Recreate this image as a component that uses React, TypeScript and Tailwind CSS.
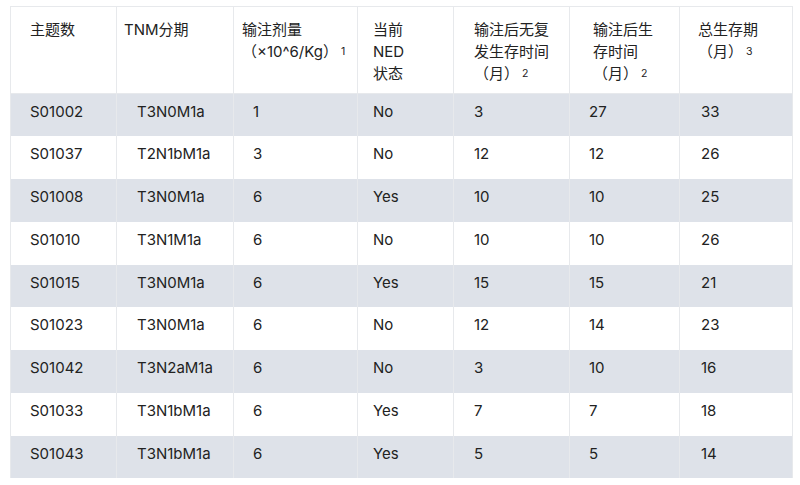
import type { ReactNode } from "react";

type Row = {
  id: string;
  tnm: string;
  dose: string;
  ned: string;
  rfs: string;
  os: string;
  total: string;
};

const rows: Row[] = [
  { id: "S01002", tnm: "T3N0M1a", dose: "1", ned: "No", rfs: "3", os: "27", total: "33" },
  { id: "S01037", tnm: "T2N1bM1a", dose: "3", ned: "No", rfs: "12", os: "12", total: "26" },
  { id: "S01008", tnm: "T3N0M1a", dose: "6", ned: "Yes", rfs: "10", os: "10", total: "25" },
  { id: "S01010", tnm: "T3N1M1a", dose: "6", ned: "No", rfs: "10", os: "10", total: "26" },
  { id: "S01015", tnm: "T3N0M1a", dose: "6", ned: "Yes", rfs: "15", os: "15", total: "21" },
  { id: "S01023", tnm: "T3N0M1a", dose: "6", ned: "No", rfs: "12", os: "14", total: "23" },
  { id: "S01042", tnm: "T3N2aM1a", dose: "6", ned: "No", rfs: "3", os: "10", total: "16" },
  { id: "S01033", tnm: "T3N1bM1a", dose: "6", ned: "Yes", rfs: "7", os: "7", total: "18" },
  { id: "S01043", tnm: "T3N1bM1a", dose: "6", ned: "Yes", rfs: "5", os: "5", total: "14" },
];

const Sup = ({ n }: { n: string }) => (
  <sup className="text-[10.5px] ml-[3px] relative -top-[2px]">{n}</sup>
);

const Th = ({ w, pl, children }: { w: string; pl: string; children: ReactNode }) => (
  <th
    className={`${w} ${pl} align-top text-left font-normal pt-[12px] leading-[22px] border border-[#e7e9ec]`}
  >
    {children}
  </th>
);

export default function App() {
  return (
    <div
      className="w-[800px] h-[485px] bg-white pt-[6px] pl-[10px] text-[15px] text-[#222]"
      style={{ fontFamily: '"Inter", "Noto Sans CJK SC", sans-serif' }}
    >
      <table className="w-[782px] border-collapse table-fixed">
        <thead>
          <tr className="h-[87px]">
            <Th w="w-[106px]" pl="pl-[19px]">主题数</Th>
            <Th w="w-[117px]" pl="pl-[7px]">TNM分期</Th>
            <Th w="w-[124px]" pl="pl-[8px]">
              输注剂量
              <br />
              （×10^6/Kg）
              <Sup n="1" />
            </Th>
            <Th w="w-[96px]" pl="pl-[15px]">
              当前
              <br />
              NED
              <br />
              状态
            </Th>
            <Th w="w-[116px]" pl="pl-[20px]">
              输注后无复
              <br />
              发生存时间
              <br />
              （月）
              <Sup n="2" />
            </Th>
            <Th w="w-[110px]" pl="pl-[23px]">
              输注后生
              <br />
              存时间
              <br />
              （月）
              <Sup n="2" />
            </Th>
            <Th w="w-[113px]" pl="pl-[18px]">
              总生存期
              <br />
              （月）
              <Sup n="3" />
            </Th>
          </tr>
        </thead>
        <tbody>
          {rows.map((r, i) => (
            <tr
              key={r.id}
              className={`h-[42.75px] ${i % 2 === 0 ? "bg-[#dee2e9]" : "bg-white"}`}
            >
              <td className="pl-[19px] pb-[6px] border-x border-[#e7e9ec]">{r.id}</td>
              <td className="pl-[20px] pb-[6px] border-x border-[#e7e9ec]">{r.tnm}</td>
              <td className="pl-[19px] pb-[6px] border-x border-[#e7e9ec]">{r.dose}</td>
              <td className="pl-[15px] pb-[6px] border-x border-[#e7e9ec]">{r.ned}</td>
              <td className="pl-[20px] pb-[6px] border-x border-[#e7e9ec]">{r.rfs}</td>
              <td className="pl-[19px] pb-[6px] border-x border-[#e7e9ec]">{r.os}</td>
              <td className="pl-[21px] pb-[6px] border-x border-[#e7e9ec]">{r.total}</td>
            </tr>
          ))}
        </tbody>
      </table>
    </div>
  );
}
